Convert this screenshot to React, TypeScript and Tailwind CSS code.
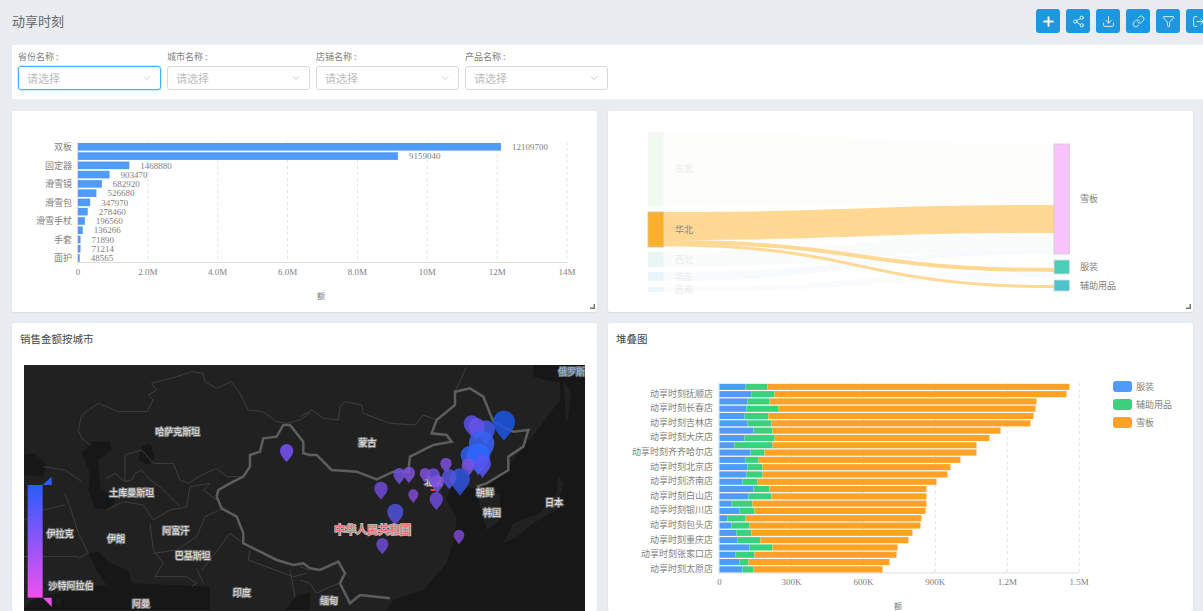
import { ChevronDown, Download, Link, LogOut, Filter, Plus, Share2 } from 'lucide-react';

const CJK = '"Noto Sans CJK SC", sans-serif';
const SERIF = '"Liberation Serif", "Noto Sans CJK SC", serif';

const filters = ['省份名称', '城市名称', '店铺名称', '产品名称'];
const toolbar = [Plus, Share2, Download, Link, Filter, LogOut];

const products: [string, number][] = [
    ['双板', 12109700], ['', 9159040], ['固定器', 1468880], ['', 903470], ['滑雪镜', 682920],
    ['', 526680], ['滑雪包', 347970], ['', 278460], ['滑雪手杖', 196560], ['', 136266],
    ['手套', 71890], ['', 71214], ['面护', 48565],
];

// blue end, green end, orange end in px from the axis
const stacks: [string, number, number, number][] = [
    ['', 26, 48, 350], ['动享时刻抚顺店', 32, 55, 347], ['', 28, 50, 317], ['动享时刻长春店', 27, 59, 316],
    ['', 25, 49, 314], ['动享时刻吉林店', 28, 52, 311], ['', 34, 53, 281], ['动享时刻大庆店', 25, 55, 270],
    ['', 15, 53, 257], ['动享时刻齐齐哈尔店', 31, 45, 257], ['', 26, 39, 241], ['动享时刻北京店', 28, 43, 231],
    ['', 27, 43, 228], ['动享时刻济南店', 23, 38, 217], ['', 34, 50, 207], ['动享时刻白山店', 29, 52, 207],
    ['', 12, 33, 207], ['动享时刻银川店', 20, 35, 206], ['', 8, 26, 202], ['动享时刻包头店', 12, 30, 201],
    ['', 17, 32, 193], ['动享时刻重庆店', 18, 41, 189], ['', 30, 53, 178], ['动享时刻张家口店', 16, 35, 177],
    ['', 20, 29, 170], ['动享时刻太原店', 23, 34, 163],
];

function Card({ title, children }: { title?: string; children: React.ReactNode }) {
    return (
        <div className="relative overflow-hidden rounded-[2px] bg-white shadow-[0_1px_2px_rgba(0,0,0,0.08)]">
            {title && <div className="h-[42px] pl-[8px] pt-[9px] text-[10.5px] leading-[14px] text-[#444]">{title}</div>}
            {children}
            {!title && (
                <svg className="absolute bottom-[3px] right-[2px]" width="5" height="5" viewBox="0 0 5 5">
                    <path d="M5 0v5H0v-1.5h3.5V0z" fill="#777" />
                </svg>
            )}
        </div>
    );
}

function BarChart() {
    const ticks = ['0', '2.0M', '4.0M', '6.0M', '8.0M', '10M', '12M', '14M'];
    const scale = 489 / 14000000;
    return (
        <svg className="block h-full w-full" viewBox="12 111 585 201">
            {ticks.map((t, i) => {
                const x = 78 + i * 69.86;
                return (
                    <g key={t}>
                        {i > 0 && <line x1={x} x2={x} y1="142" y2="263" stroke="#ddd" strokeWidth="0.8" strokeDasharray="3 3" />}
                        <text x={x} y="275" textAnchor="middle" fontSize="9" fontFamily={SERIF} fill="#808080">{t}</text>
                    </g>
                );
            })}
            <line x1="78" x2="567" y1="262.5" y2="262.5" stroke="#ddd" />
            <line x1="77.5" x2="77.5" y1="142" y2="263" stroke="#ddd" />
            {products.map(([label, v], i) => {
                const y = 143 + i * 9.27;
                const end = v * scale;
                return (
                    <g key={v}>
                        <rect x="78" y={y} width={end} height="7.6" fill="#4f9bf5" />
                        {label && <text x="72" y={y + 7} textAnchor="end" fontSize="9" fontFamily={CJK} fill="#808080">{label}</text>}
                        <text x={78 + end + 11} y={y + 7} fontSize="9" fontFamily={SERIF} fill="#808080">{v}</text>
                    </g>
                );
            })}
            <text x="321" y="299" textAnchor="middle" fontSize="8" fontFamily={CJK} fill="#808080">额</text>
        </svg>
    );
}

function link(y0: number, y1: number, y2: number, y3: number) {
    const a = 664;
    const b = 1054;
    const m = 859;
    return `M${a} ${y0}C${m} ${y0} ${m} ${y2} ${b} ${y2}L${b} ${y3}C${m} ${y3} ${m} ${y1} ${a} ${y1}Z`;
}

function Sankey() {
    const nodes: [string, number, number, number, string, string, string?][] = [
        ['东北', 648, 132, 74, '#f1faf0', '#ececec'],
        ['华北', 648, 212, 35, '#ffb02a', '#888', '#c4c4c4'],
        ['西北', 648, 252, 15, '#eaf6f3', '#ececec'],
        ['华东', 648, 272, 9, '#eaf4fb', '#ececec'],
        ['西南', 648, 287, 5, '#eef5fd', '#ececec'],
        ['雪板', 1054, 144, 110, '#f9c4fb', '#808080', '#ccc'],
        ['服装', 1054, 260, 14, '#4ecdb8', '#808080', '#ddd'],
        ['辅助用品', 1054, 280, 11, '#4dc3cc', '#808080', '#ddd'],
    ];
    return (
        <svg className="block h-full w-full" viewBox="608 111 585 201">
            <path d={link(132, 206, 144, 205)} fill="#fdfdfb" />
            <path d={link(252, 267, 233, 250)} fill="#f9fcfb" />
            <path d={link(272, 281, 250, 254)} fill="#f8fbfd" />
            <path d={link(287, 292, 271, 279)} fill="#f9fbfd" />
            <path d={link(212, 240, 205, 233)} fill="#ffd894" />
            <path d={link(240, 244, 268, 272)} fill="#ffd894" />
            <path d={link(243.5, 246.5, 285, 288)} fill="#ffd894" />
            {nodes.map(([name, x, y, h, fill, color, border]) => (
                <g key={name}>
                    <rect x={x} y={y} width="15.5" height={h} fill={fill} stroke={border ?? 'none'} strokeWidth="0.8" />
                    <text x={x === 648 ? 675 : 1080} y={y + h / 2 + 3} fontSize="9" fontFamily={CJK} fill={color}>{name}</text>
                </g>
            ))}
        </svg>
    );
}

function pin(cx: number, cy: number, r: number) {
    const tip = cy + r * 1.75;
    return `M${cx} ${tip}C${cx - r * 0.25} ${cy + r * 1.3} ${cx - r} ${cy + r * 0.75} ${cx - r} ${cy}A${r} ${r} 0 1 1 ${cx + r} ${cy}C${cx + r} ${cy + r * 0.75} ${cx + r * 0.25} ${cy + r * 1.3} ${cx} ${tip}Z`;
}

function MapLabel({ x, y, children, red, blue }: { x: number; y: number; children: string; red?: boolean; blue?: boolean }) {
    return (
        <text
            x={x}
            y={y + 11}
            textAnchor="middle"
            fontSize={red ? 33 : 27}
            fontFamily={CJK}
            fill={red ? '#ff5a5f' : blue ? '#8fc1ee' : '#e8e8e8'}
            stroke={red ? '#b9b9b9' : '#707070'}
            strokeWidth="6"
            paintOrder="stroke"
        >
            {children}
        </text>
    );
}

// drawn in the 3x coordinates of the two map halves
const westBorders = [
    'M205 330L215 285 265 250 325 275 410 275 430 240 415 225 440 210 425 190 500 170 545 155 580 160 585 185 620 205 665 185 690 220 715 270 760 275 800 305 830 310 870 300 900 278',
    'M205 330L215 355 240 375M345 405L395 390 430 430 490 430 510 480 535 490 575 465 620 445 650 470 700 470',
    'M345 405V485L315 460 290 475M345 485L365 480 375 460 395 450 420 480 450 500 510 560',
    'M290 570L340 545 400 555 430 600 480 570 510 565 530 560 540 500 600 490 580 510 620 540',
    'M100 440L165 450 215 485M165 520L180 560 205 640 235 700 205 715M42 600L100 570 165 555',
    'M420 610L430 690 460 730 435 770M430 700L500 690 560 650 585 590 640 565M435 770L530 770 560 790 545 800',
    'M575 750L600 720 660 640 700 670M560 745L580 790M42 710H205M720 690L715 720 850 770 890 760M840 750L855 830',
];
const eastBorders = [
    'M0 170L35 150 70 175 115 180 120 140 135 125 185 135 190 160 270 190 345 195 370 165 410 180',
    'M0 660L30 670 50 700 90 680 120 670M0 620L30 630',
    'M465 95L500 20M640 215L690 210',
];
const chinaWest = 'M620 530L625 510 660 490 700 470 720 440 720 405 750 395 760 355 800 350 820 315 840 315 880 365 880 400 900 405M620 530L635 565 680 590 700 640 700 670 740 690 800 720 850 735 880 730 900 745';
const chinaEast = 'M30 285L50 285 95 330 170 335 230 358 280 335 325 335 330 290 400 255 455 245 440 225 395 220 410 180 465 135 465 95 510 85 550 110 580 185 640 215 685 210 670 260 625 290 625 330 560 370 530 380M30 625L60 630 115 605 135 640 120 670 150 730 180 705 270 715';

const pins: [number, number, number, string][] = [
    [612, 185, 33, '#1c55e4'], [515, 190, 24, '#5a50ea'], [558, 208, 27, '#3f58e8'], [530, 198, 24, '#6652ec'],
    [545, 250, 38, '#3a62f2'], [510, 285, 28, '#2f60f0'], [535, 285, 35, '#2d66ff'], [548, 310, 25, '#5a55f0'],
    [505, 315, 20, '#7a50e0'], [438, 310, 17, '#7b4fd8'], [480, 355, 30, '#2d55dd'], [448, 350, 22, '#5555dd'],
    [400, 345, 20, '#6a4fe0'], [375, 340, 16, '#7d50d8'], [412, 365, 20, '#7c50e0'], [327, 338, 18, '#7c50d8'],
    [298, 342, 18, '#7050dc'], [243, 385, 20, '#7149d8'], [340, 403, 15, '#8148d4'], [409, 416, 20, '#6b4bd8'],
    [286, 455, 24, '#4d52d8'], [477, 525, 16, '#7b46d0'], [247, 552, 18, '#6d4ad4'],
];

function WorldMap() {
    return (
        <svg className="ml-[12px] block" width="561" height="246" viewBox="24 365 561 246">
            <defs>
                <linearGradient id="range" x1="0" y1="0" x2="0" y2="1">
                    <stop offset="0" stopColor="#2a5cff" />
                    <stop offset="1" stopColor="#f24ff0" />
                </linearGradient>
            </defs>
            <rect x="24" y="365" width="561" height="246" fill="#212121" />
            <g transform="translate(10 320) scale(0.3333)">
                <path d="M42 405L75 400 110 435 100 470 42 465ZM215 400L250 365 300 365 305 390 265 420 270 500 315 540 300 570 255 565 235 510 240 460ZM395 380L420 370 435 410 415 435 385 420ZM235 700L265 695 300 730 355 750 365 790 600 800 600 870 40 870 65 840 180 810 290 795 265 760Z" fill="#171717" />
                <path d="M825 870L860 830 900 815V870Z" fill="#171717" />
                <g fill="none" stroke="#3e3e3e" strokeWidth="3">
                    {westBorders.map((d) => <path key={d} d={d} />)}
                </g>
                <path d={chinaWest} fill="none" stroke="#5e5e5e" strokeWidth="7.5" />
                <MapLabel x={503} y={335}>哈萨克斯坦</MapLabel>
                <MapLabel x={365} y={518}>土库曼斯坦</MapLabel>
                <MapLabel x={497} y={630}>阿富汗</MapLabel>
                <MapLabel x={548} y={706}>巴基斯坦</MapLabel>
                <MapLabel x={318} y={654}>伊朗</MapLabel>
                <MapLabel x={150} y={640}>伊拉克</MapLabel>
                <MapLabel x={183} y={797}>沙特阿拉伯</MapLabel>
                <MapLabel x={393} y={850}>阿曼</MapLabel>
                <MapLabel x={695} y={818}>印度</MapLabel>
                <path d={pin(830, 392, 20)} fill="#6b4bd8" />
                <rect x="53" y="495" width="45" height="338" fill="url(#range)" />
                <path d="M98 495H125V470Z" fill="#2a5cff" />
                <path d="M98 833H125V860Z" fill="#f24ff0" />
                <text x="145" y="853" textAnchor="middle" fontSize="24" fontFamily={SERIF} fill="#333">0</text>
            </g>
            <g transform="translate(300 360) scale(0.3333)">
                <path d="M855 15H700V50L780 70V120L720 200 670 260 625 320 560 370 525 385 450 380 440 420 470 470 465 530 440 610 370 690 280 720 260 752H855Z" fill="#171717" />
                <path d="M530 385L600 400 600 480 560 510 540 440ZM610 550L640 490 720 460 770 400 775 350 790 370 770 450 700 490 650 530ZM790 60L815 100 800 200Z" fill="#212121" />
                <g fill="none" stroke="#3e3e3e" strokeWidth="3">
                    {eastBorders.map((d) => <path key={d} d={d} />)}
                </g>
                <path d={chinaEast} fill="none" stroke="#5e5e5e" strokeWidth="7.5" />
                <MapLabel x={202} y={247}>蒙古</MapLabel>
                <MapLabel x={400} y={365}>北京</MapLabel>
                <MapLabel x={555} y={398}>朝鲜</MapLabel>
                <MapLabel x={576} y={458}>韩国</MapLabel>
                <MapLabel x={762} y={427}>日本</MapLabel>
                <MapLabel x={87} y={720}>缅甸</MapLabel>
                <MapLabel x={815} y={35} blue>俄罗斯</MapLabel>
                <rect x="392" y="387" width="14" height="6" fill="#ff3b3b" />
                {pins.map(([x, y, r, c]) => <path key={`${x}-${y}`} d={pin(x, y, r)} fill={c} opacity="0.85" />)}
                <MapLabel x={218} y={512} red>中华人民共和国</MapLabel>
            </g>
        </svg>
    );
}

function StackChart() {
    const ticks = ['0', '300K', '600K', '900K', '1.2M', '1.5M'];
    return (
        <svg className="block" width="585" height="246" viewBox="608 365 585 246">
            {ticks.map((t, i) => {
                const x = 719.5 + i * 71.95;
                return (
                    <g key={t}>
                        {i > 0 && <line x1={x} x2={x} y1="383" y2="573" stroke="#ddd" strokeWidth="0.8" strokeDasharray="3 3" />}
                        <text x={x} y="585" textAnchor="middle" fontSize="9" fontFamily={SERIF} fill="#808080">{t}</text>
                    </g>
                );
            })}
            <line x1="719" x2="1079" y1="573" y2="573" stroke="#ddd" />
            <line x1="719" x2="719" y1="383" y2="573" stroke="#ddd" />
            {stacks.map(([label, a, b, c], i) => {
                const y = 383.8 + i * 7.3;
                return (
                    <g key={i}>
                        <rect x="719.5" y={y} width={a} height="6.1" fill="#4f9bf5" />
                        <rect x={719.5 + a} y={y} width={b - a} height="6.1" fill="#3ad07c" />
                        <rect x={719.5 + b} y={y} width={c - b} height="6.1" fill="#ffa226" />
                        {label && <text x="713" y={y + 5.5} textAnchor="end" fontSize="9" fontFamily={CJK} fill="#808080">{label}</text>}
                    </g>
                );
            })}
            <text x="898" y="609" textAnchor="middle" fontSize="8" fontFamily={CJK} fill="#808080">额</text>
            {[['服装', '#4f9bf5'], ['辅助用品', '#3ad07c'], ['雪板', '#ffa226']].map(([name, color], i) => (
                <g key={name}>
                    <rect x="1113" y={381 + i * 18} width="19" height="11" rx="3" fill={color} />
                    <text x="1136" y={390 + i * 18} fontSize="9" fontFamily={CJK} fill="#808080">{name}</text>
                </g>
            ))}
        </svg>
    );
}

export default function App() {
    return (
        <div className="h-[611px] w-[1203px] overflow-hidden bg-[#e9ecf1] font-['Noto_Sans_CJK_SC',sans-serif]">
            {/* Header */}
            <header className="flex h-[45px] items-start pl-3">
                <h1 className="mt-[12px] flex-1 text-[13px] font-normal leading-[18px] text-[#666]">动享时刻</h1>
                <div className="mr-[-7px] mt-[9px] flex shrink-0 gap-[6px]">
                    {toolbar.map((Icon, i) => (
                        <button key={i} className="flex h-[24px] w-[24px] items-center justify-center rounded-[3px] bg-[#1c97e0] text-white">
                            <Icon size={i === 0 ? 15 : 13} strokeWidth={i === 0 ? 3 : 1.5} />
                        </button>
                    ))}
                </div>
            </header>

            {/* Filters */}
            <section className="ml-3 flex h-[54px] gap-[6px] rounded-l-[2px] bg-white pl-[6px] pt-[6px]">
                {filters.map((name, i) => (
                    <div key={name} className="w-[143px]">
                        <div className="h-[15px] text-[9px] leading-[12px] text-[#808080]">{name} :</div>
                        <div className={`flex h-[24px] items-center justify-between rounded-[3px] border pl-[8px] pr-[7px] text-[11px] text-[#bdbdbd] ${i === 0 ? 'border-[#40b4f0] shadow-[0_0_0_1px_rgba(64,180,240,0.25)]' : 'border-[#d9d9d9]'}`}>
                            请选择
                            <ChevronDown size={12} strokeWidth={1} className="text-[#999]" />
                        </div>
                    </div>
                ))}
            </section>

            {/* Charts */}
            <main className="ml-3 mt-3 grid grid-cols-[585px_585px] grid-rows-[201px_288px] gap-x-[11px] gap-y-[11px]">
                <Card><BarChart /></Card>
                <Card><Sankey /></Card>
                <Card title="销售金额按城市"><WorldMap /></Card>
                <Card title="堆叠图"><StackChart /></Card>
            </main>
        </div>
    );
}
